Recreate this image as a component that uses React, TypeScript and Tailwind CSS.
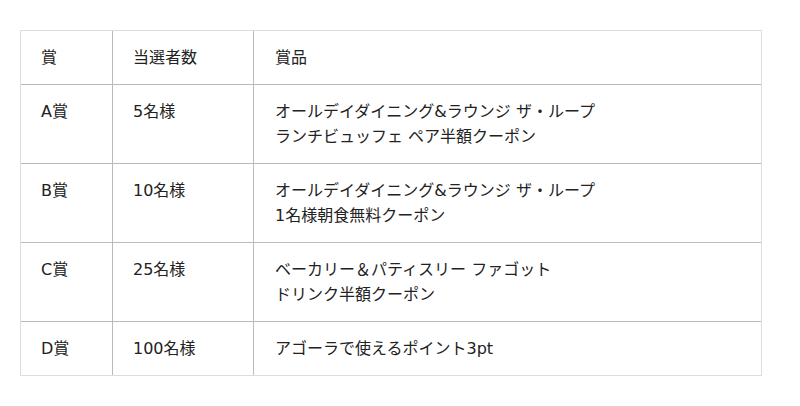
import React from "react";

const rows = [
    { prize: "A賞", count: "5名様", item: ["オールデイダイニング&ラウンジ ザ・ループ", "ランチビュッフェ ペア半額クーポン"] },
    { prize: "B賞", count: "10名様", item: ["オールデイダイニング&ラウンジ ザ・ループ", "1名様朝食無料クーポン"] },
    { prize: "C賞", count: "25名様", item: ["ベーカリー＆パティスリー ファゴット", "ドリンク半額クーポン"] },
    { prize: "D賞", count: "100名様", item: ["アゴーラで使えるポイント3pt"] },
];

const Row = ({ a, b, c, first }: { a: string; b: string; c: string[]; first?: boolean }) => {
    return (
        <div className={`grid grid-cols-[91px_141px_1fr] ${first ? "" : "border-t border-[#bbb]"}`}>
            <div className="pl-[20px] py-[14px]">{a}</div>
            <div className="pl-[20px] py-[14px] border-l border-[#bbb]">{b}</div>
            <div className="pl-[21px] py-[14px] border-l border-[#bbb]">
                {c.map((line) => (
                    <div key={line}>{line}</div>
                ))}
            </div>
        </div>
    );
};

const App = () => {
    return (
        <div
            className="w-[800px] h-[406px] bg-white pt-[30px] pl-[20px] text-[16px] leading-[25px] text-[#222]"
            style={{ fontFamily: '"DejaVu Sans", "Noto Sans CJK JP", sans-serif' }}
        >
            <div className="w-[742px] border border-[#ddd]">
                <Row a="賞" b="当選者数" c={["賞品"]} first />
                {rows.map((r) => (
                    <Row key={r.prize} a={r.prize} b={r.count} c={r.item} />
                ))}
            </div>
        </div>
    );
};

export default App;
